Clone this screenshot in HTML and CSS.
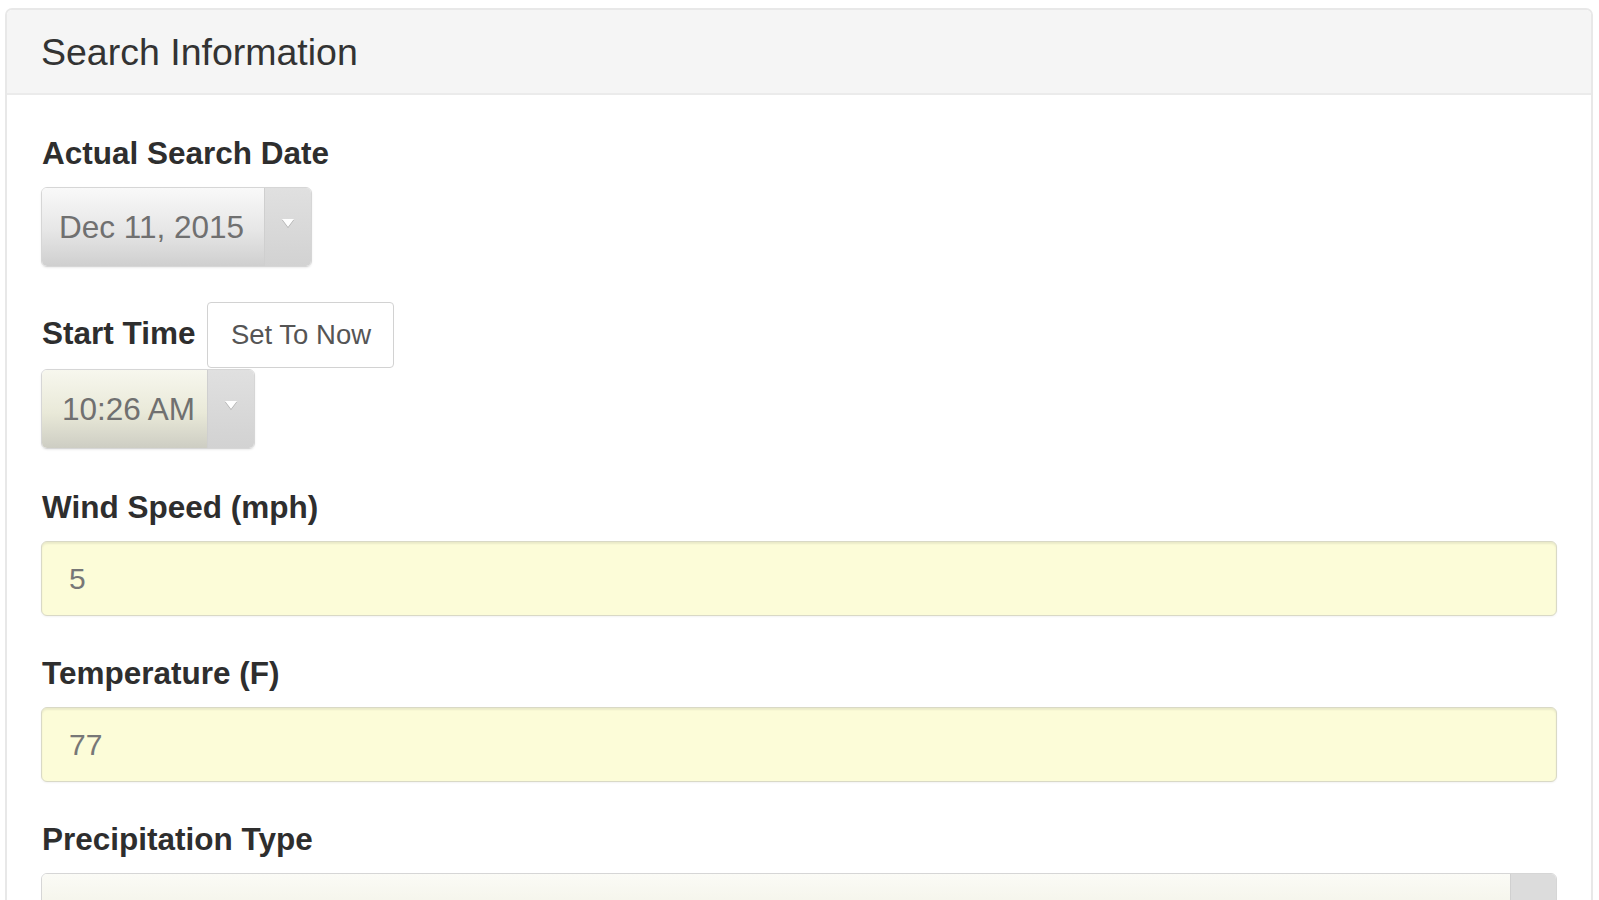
FILE: index.html
```html
<!DOCTYPE html>
<html>
<head>
<meta charset="utf-8">
<link rel="stylesheet" href="styles.css">
</head>
<body>
<div class="panel">
  <div class="panel-heading">Search Information</div>
  <div class="panel-body">
    <div class="group group-date">
      <div class="label">Actual Search Date</div>
      <div class="picker date-picker">
        <div class="picker-value">Dec 11, 2015</div>
        <div class="picker-arrow"><span class="tri"></span></div>
      </div>
    </div>
    <div class="group group-time">
      <div class="time-row">
        <span class="label inline">Start Time</span>
        <button class="btn">Set To Now</button>
      </div>
      <div class="picker time-picker">
        <div class="picker-value">10:26 AM</div>
        <div class="picker-arrow"><span class="tri"></span></div>
      </div>
    </div>
    <div class="group">
      <div class="label">Wind Speed (mph)</div>
      <div class="input">5</div>
    </div>
    <div class="group">
      <div class="label">Temperature (F)</div>
      <div class="input">77</div>
    </div>
    <div class="group">
      <div class="label">Precipitation Type</div>
      <div class="select">
        <div class="select-value"></div>
        <div class="select-arrow"></div>
      </div>
    </div>
  </div>
</div>
</body>
</html>
```
FILE: styles.css
```css
html, body {
  margin: 0;
  padding: 0;
  background: #ffffff;
  overflow: hidden;
  height: 900px;
}
body {
  font-family: "Liberation Sans", Arial, sans-serif;
  color: #333333;
}
.panel {
  margin: 8px 6px 0 5px;
  border: 2px solid #e8e8e8;
  border-radius: 7px;
  background: #ffffff;
  overflow: hidden;
}
.panel-heading {
  background: #f5f5f5;
  border-bottom: 2px solid #ebebeb;
  font-size: 37.5px;
  line-height: 44px;
  padding: 20px 34px 19px 34px;
  color: #333333;
}
.panel-body {
  padding: 40px 34px 40px 34px;
}
.group {
  margin-bottom: 39px;
}
.group-date {
  margin-bottom: 35px;
}
.group-time {
  margin-bottom: 40px;
}
.label {
  font-size: 31.5px;
  line-height: 36px;
  font-weight: bold;
  color: #2e2e2e;
  margin-bottom: 16px;
  padding-left: 1px;
}
.label.inline {
  margin-bottom: 0;
}
.time-row {
  display: flex;
  align-items: baseline;
  gap: 12px;
}
.btn {
  font-family: "Liberation Sans", Arial, sans-serif;
  font-size: 27.5px;
  line-height: 64px;
  height: 66px;
  padding: 0 20px;
  border: 1px solid #d2d2d2;
  border-radius: 4px;
  background: #ffffff;
  color: #555555;
  box-sizing: border-box;
  width: 187px;
  white-space: nowrap;
}
.picker {
  display: flex;
  height: 80px;
  border: 1px solid #d6d6d6;
  border-radius: 6px;
  overflow: hidden;
  box-sizing: border-box;
  box-shadow: 0 1px 2px rgba(0, 0, 0, 0.08);
}
.date-picker {
  width: 271px;
}
.time-picker {
  width: 214px;
  margin-top: 1px;
}
.picker-value {
  flex: 1;
  font-size: 31.5px;
  line-height: 78px;
  color: #707070;
  padding-left: 17px;
  white-space: nowrap;
}
.date-picker .picker-value {
  background: linear-gradient(#f9f9f9, #e6e6e6 55%, #cfcfcf);
}
.time-picker .picker-value {
  padding-left: 20px;
  background: linear-gradient(#f7f7ee, #e9e9d8 55%, #cdcdc3);
}
.picker-arrow {
  width: 47px;
  background: linear-gradient(#e0e0e0, #d2d2d2);
  border-left: 1px solid #cfcfcf;
  display: flex;
  justify-content: center;
  align-items: flex-start;
  padding-top: 31px;
  box-sizing: border-box;
}
.tri {
  width: 0;
  height: 0;
  border-left: 6px solid transparent;
  border-right: 6px solid transparent;
  border-top: 8px solid #ffffff;
  filter: drop-shadow(0 1px 0 rgba(0, 0, 0, 0.22));
}
.input {
  height: 75px;
  box-sizing: border-box;
  border: 1px solid #d9d9c6;
  border-radius: 6px;
  background: #fcfcd8;
  box-shadow: inset 0 2px 2px rgba(0, 0, 0, 0.07), 0 1px 2px rgba(0, 0, 0, 0.05);
  font-size: 30px;
  line-height: 73px;
  color: #777777;
  padding-left: 27px;
}
.select {
  display: flex;
  height: 75px;
  box-sizing: border-box;
  border: 1px solid #d6d6d6;
  border-radius: 6px;
  overflow: hidden;
}
.select-value {
  flex: 1;
  background: linear-gradient(#fbfbf6, #ececdc);
}
.select-arrow {
  width: 45px;
  background: #dcdcdc;
  border-left: 1px solid #d0d0d0;
}
```
